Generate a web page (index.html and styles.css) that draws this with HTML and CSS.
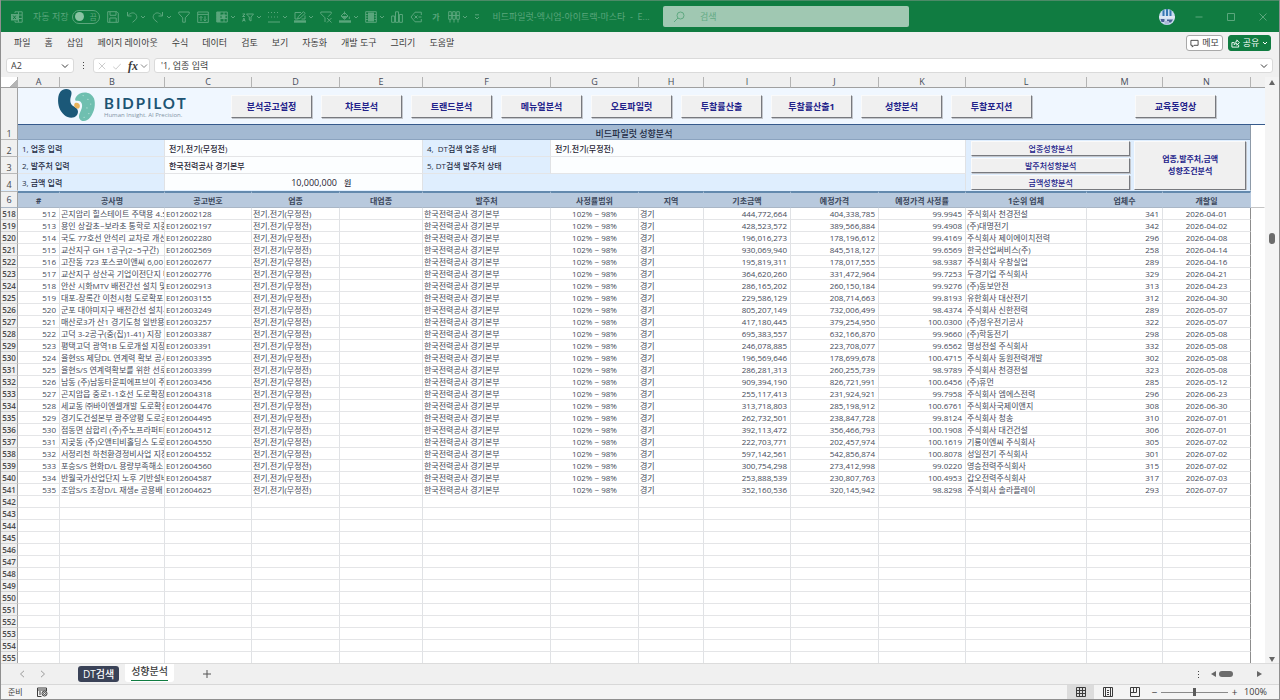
FILE: index.html
```html
<!DOCTYPE html>
<html lang="ko">
<head>
<meta charset="utf-8">
<title>비드파일럿 성향분석</title>
<link rel="stylesheet" href="styles.css">
</head>
<body>
<div class="app">
  <header class="titlebar">
    <div class="quick">
      <svg class="ico app-logo" viewBox="0 0 12 12"><path d="M4 2V.8h7.200v10.400H4V10M7.500 1v10M4 4h7M7 7.500h4"/><rect class="solid" x="0" y="3" width="7" height="6.500"/><path class="cut" d="M2.200 4.600l2.600 3.400M4.800 4.600L2.200 8"/></svg>
      <label class="autosave"><span>자동 저장</span><input type="checkbox" class="sr"><span class="toggle"><i></i>끔</span></label>
      <div class="tools">
        <button class="tool" aria-label="저장"><svg class="ico" viewBox="0 0 12 12"><path d="M.7.7h9.200l1.400 1.400v9.200H.7zM3 .7v3.600h6V.7M2.800 11.300V7h6.400v4.300"/></svg></button>
        <button class="split" aria-label="실행 취소"><svg class="ico" viewBox="0 0 12 12"><path d="M1.500 1v4h4M1.700 4.800C4 1.800 7.500 1 9.500 3s1.600 4.500-.5 6.200L6.500 11.300"/></svg><svg class="chev" viewBox="0 0 6 6"><path d="M1 2l2 2 2-2"/></svg></button>
        <button class="split" aria-label="다시 실행"><svg class="ico" viewBox="0 0 12 12"><path d="M10.500 1v4h-4M10.300 4.800C8 1.800 4.500 1 2.500 3S.9 7.500 3 9.200l2.500 2.100"/></svg><svg class="chev" viewBox="0 0 6 6"><path d="M1 2l2 2 2-2"/></svg></button>
        <button class="tool" aria-label="필터"><svg class="ico" viewBox="0 0 12 12"><path d="M.8 1h10.400v1.600L7.300 6.800v4.400H4.700V6.800L.8 2.600z"/></svg></button>
        <button class="tool" aria-label="정렬"><svg class="ico" viewBox="0 0 12 12"><path d="M.7 1h10.600v10.400H.7zM.7 3.400h10.600M4 10V5.500M2.600 6.800L4 5.400l1.400 1.400M8 5.200V9.800M6.600 8.500L8 9.900l1.400-1.400"/></svg></button>
        <button class="split" aria-label="표"><svg class="ico" viewBox="0 0 12 12"><path d="M.7 1h10.600v10H.7zM.7 4.300h10.600M.7 7.600h10.600M4 1v10M8 1v10"/><path class="solid" d="M1 1h3v10H1zM5.500 3.500h4V8h-4z"/></svg><svg class="chev" viewBox="0 0 6 6"><path d="M1 2l2 2 2-2"/></svg></button>
        <button class="split" aria-label="정렬 및 필터"><svg class="ico" viewBox="0 0 12 12"><path d="M4.500 3h7L9 6v4L7.300 9V6zM.5 3h2.500L.5 5.500H3M.5 10.500l1.400-3.500 1.300 3.500M1 9.500h2"/></svg><svg class="chev" viewBox="0 0 6 6"><path d="M1 2l2 2 2-2"/></svg></button>
        <button class="split" aria-label="테두리"><svg class="ico" viewBox="0 0 12 12"><path stroke-dasharray="1 2" d="M0 1.500h12M0 6h12"/><path d="M0 11h12"/></svg><svg class="chev" viewBox="0 0 6 6"><path d="M1 2l2 2 2-2"/></svg></button>
        <button class="split" aria-label="펜 색"><svg class="ico" viewBox="0 0 12 12"><path d="M7 1.500H1v6.500h2.500M3.500 8l.8-2.500L9.500.7l1.700 1.700L6 7.200zM7.500 8H11V4.500"/><rect class="solid" y="9.300" width="12" height="2.400"/></svg><svg class="chev" viewBox="0 0 6 6"><path d="M1 2l2 2 2-2"/></svg></button>
        <button class="tool" aria-label="필터 지우기"><svg class="ico" viewBox="0 0 12 12"><path d="M5 11V6.800L.8 2.600V1h10.400v1.600L8 5.800M7 7l4.500 4.500M11.500 7L7 11.500"/></svg></button>
        <button class="split" aria-label="채우기 색"><svg class="ico" viewBox="0 0 12 12"><path d="M5.500.5v3M2 5l3.500-3.500L9 5 5.500 8.300zM10.300 5.500v2.500"/><path class="solid" d="M2.500 5h6L5.500 8z"/><rect class="solid" y="9.300" width="12" height="2.400"/></svg><svg class="chev" viewBox="0 0 6 6"><path d="M1 2l2 2 2-2"/></svg></button>
        <button class="split" aria-label="창 고정"><svg class="ico" viewBox="0 0 12 12"><path d="M.7.7h10.600v10.600H.7zM.7 3.500h2M.7 6h2M.7 8.500h2M9.500 3.500h2M9.500 6h2M9.500 8.500h2"/><rect class="solid" x="3" y="1.500" width="6" height="9"/></svg><svg class="chev" viewBox="0 0 6 6"><path d="M1 2l2 2 2-2"/></svg></button>
        <button class="tool" aria-label="차트"><svg class="ico" viewBox="0 0 12 12"><path d="M.6 5h3v6.300h-3zM4.500.8h3v10.500h-3zM8.400 3.500h3v7.800h-3z"/></svg></button>
        <button class="tool" aria-label="레이블"><svg class="ico" viewBox="0 0 12 12"><path d="M11.300 4V1.200H5L1 6l4 4.800h6.300V8M4.500 4.500l3 3M7.500 4.500l-3 3M8.500 6h3"/></svg></button>
        <button class="tool ga" aria-label="글꼴">가</button>
        <button class="split" aria-label="열"><svg class="ico" viewBox="0 0 12 12"><path d="M.7.7h2.600v7.600H.7zM4.700.7h2.600v7.600H4.700zM8.700.7h2.600v7.600H8.700zM.7 4.500h10.600M2 8.500v3M6 8.500v3M10 8.500v3"/></svg><svg class="chev" viewBox="0 0 6 6"><path d="M1 2l2 2 2-2"/></svg></button>
        <button class="more" aria-label="사용자 지정"><svg class="chev" viewBox="0 0 6 6"><path d="M1 .8h4M1 3l2 2 2-2"/></svg></button>
      </div>
      <span class="doc-name">비드파일럿-엑시엄-아이트랙-마스타 &nbsp;-&nbsp; E...</span>
    </div>
    <label class="search">
      <svg class="ico" viewBox="0 0 12 12"><circle cx="7.500" cy="4.500" r="3.500"/><path d="M5 7L1 11"/></svg>
      <input type="text" placeholder="검색" aria-label="검색">
    </label>
    <div class="window-tools">
      <svg class="avatar" viewBox="0 0 16 16"><circle cx="8" cy="8" r="8" fill="#c9dcf0"/><path fill="#3878b4" d="M3.500 2l2-1.500V7h-2zM7 0h2v7H7zM10.500.5l2 1.500v5h-2z"/><path fill="#dfe8f4" d="M.2 7h15.600v2.500H.2z"/><path fill="#4b5f93" d="M1.500 10h4v3h-3zM8 10.500h6l-2 3H8z"/><path fill="#aeb9d8" d="M5 12h5v3.500H6z"/></svg>
      <button aria-label="최소화"><svg class="ico" viewBox="0 0 12 12"><path d="M2.500 6h7"/></svg></button>
      <button aria-label="최대화"><svg class="ico" viewBox="0 0 12 12"><path d="M2.500 2.500h7v7h-7z"/></svg></button>
      <button aria-label="닫기"><svg class="ico" viewBox="0 0 12 12"><path d="M2.500 2.500l7 7M9.500 2.500l-7 7"/></svg></button>
    </div>
  </header>

  <nav class="menubar">
    <a href="#">파일</a><a href="#">홈</a><a href="#">삽입</a><a href="#">페이지 레이아웃</a><a href="#">수식</a><a href="#">데이터</a><a href="#">검토</a><a href="#">보기</a><a href="#">자동화</a><a href="#">개발 도구</a><a href="#">그리기</a><a href="#">도움말</a>
    <div class="menu-actions">
      <button class="memo"><svg viewBox="0 0 10 10"><path d="M1 1.500h8v5.500H4.500L2.500 9V7H1z"/></svg>메모</button>
      <button class="share"><svg viewBox="0 0 10 10"><path d="M3.500 4H1v5h7.500V6.500M3.500 6.500c0-2.500 1.500-3.500 3-3.500V1l2.800 3-2.800 3V5c-1.500 0-2.300.3-3 1.500z"/></svg>공유<svg class="small" viewBox="0 0 6 6"><path d="M1 2l2 2 2-2"/></svg></button>
    </div>
  </nav>

  <div class="formula">
    <div class="namebox"><input type="text" value="A2" aria-label="이름 상자"><svg viewBox="0 0 8 8"><path d="M1 2.500l3 3 3-3"/></svg></div>
    <span class="vdots"></span>
    <div class="fx-box">
      <svg class="dim" viewBox="0 0 10 10"><path d="M1 1l8 8M9 1L1 9"/></svg>
      <svg class="dim" viewBox="0 0 10 10"><path d="M0 5.500L3.500 9 10 2"/></svg>
      <span class="fx">fx</span>
      <svg class="drop" viewBox="0 0 8 8"><path d="M1 2.500l3 3 3-3"/></svg>
    </div>
    <div class="entry"><input type="text" value="'1, 업종 입력" aria-label="수식 입력줄"><svg viewBox="0 0 8 8"><path d="M1 2.500l3 3 3-3"/></svg></div>
  </div>

  <main class="sheet">
    <div class="grid-wrap">
      <table class="grid">
        <colgroup>
          <col class="w-head"><col class="w-a"><col class="w-b"><col class="w-c"><col class="w-d"><col class="w-e"><col class="w-f"><col class="w-g"><col class="w-h"><col class="w-i"><col class="w-j"><col class="w-k"><col class="w-l"><col class="w-m"><col class="w-n"><col class="w-o">
        </colgroup>
        <thead>
          <tr class="letters"><th class="corner"></th><th>A</th><th>B</th><th>C</th><th>D</th><th>E</th><th>F</th><th>G</th><th>H</th><th>I</th><th>J</th><th>K</th><th>L</th><th>M</th><th>N</th><th></th></tr>
          <tr class="banner">
            <th class="num" rowspan="2">1</th>
            <td colspan="15">
              <div class="banner-row">
                <div class="logo">
                  <svg viewBox="0 0 42 36"><path fill="#1b5878" d="M9 0c6 0 6.500 4 5 8-1.500 5-.5 9 4 11 4 2 4.500 6 2 9-3 3.500-9 3-13-.5C2 23 0 17 .5 10 1 4 4 0 9 0z"/><path fill="#6fbfb0" d="M23 5c6-3 13-1 15.500 5 2 6 .5 14-4 20-3 4-7 5-10 3-3-2.500-2-6 0-10 2-4 2-8-1-10-3-1-5 0-5-2s2-4.500 4.500-6z"/><path fill="#e9b35c" d="M20 14.500c2 0 3.500 1.500 3.500 3.500S22 21.500 20 20.500 17.500 19 17.500 17s1-2.500 2.500-2.500z"/><g fill="#b4e0d6"><circle cx="27" cy="7" r=".7"/><circle cx="32" cy="11" r=".7"/><circle cx="35" cy="16" r=".7"/><circle cx="31" cy="20" r=".7"/><circle cx="33" cy="26" r=".7"/><circle cx="28" cy="30" r=".7"/></g></svg>
                  <div class="brand"><strong>BIDPILOT</strong><span>Human Insight. AI Precision.</span></div>
                </div>
                <button class="btn">분석공고설정</button><button class="btn">챠트분석</button><button class="btn">트랜드분석</button><button class="btn">메뉴얼분석</button><button class="btn">오토파일럿</button><button class="btn">투찰률산출</button><button class="btn">투찰률산출1</button><button class="btn">성향분석</button><button class="btn">투찰포지션</button><button class="btn last">교육동영상</button>
              </div>
            </td>
          </tr>
          <tr class="title"><th colspan="14">비드파일럿 성향분석</th><td class="off"></td></tr>
          <tr class="input"><th class="num">2</th><th class="lab" colspan="2">1, 업종 입력</th><td class="val" colspan="3">전기,전기(무정전)</td><th class="lab">4,&nbsp; DT검색 업종 상태</th><td class="val" colspan="5">전기,전기(무정전)</td>
            <td class="actions" colspan="3" rowspan="3"><div class="action-grid"><button class="btn thin">업종성향분석</button><button class="btn thin">발주처성향분석</button><button class="btn thin">금액성향분석</button><button class="btn tall">업종,발주처,금액<br>성향조건분석</button></div></td><td class="off" rowspan="3"></td></tr>
          <tr class="input"><th class="num">3</th><th class="lab" colspan="2">2, 발주처 입력</th><td class="val" colspan="3">한국전력공사 경기본부</td><th class="lab">5, DT검색 발주처 상태</th><td class="val" colspan="5"></td></tr>
          <tr class="input last-input"><th class="num">4</th><th class="lab" colspan="2">3, 금액 입력</th><td class="val amount" colspan="2">10,000,000</td><td class="val">원</td><td class="fill" colspan="6"></td></tr>
          <tr class="heads"><th class="num">6</th><th>#</th><th>공사명</th><th>공고번호</th><th>업종</th><th>대업종</th><th>발주처</th><th>사정률범위</th><th>지역</th><th>기초금액</th><th>예정가격</th><th>예정가격 사정률</th><th>1순위 업체</th><th>업체수</th><th>개찰일</th><td class="off"></td></tr>
        </thead>
        <tbody id="rows"></tbody>
      </table>
    </div>
    <div class="vscroll"><span class="up"></span><span class="thumb"></span><span class="down"></span></div>
  </main>

  <footer>
    <div class="tabs">
      <button class="arrow" aria-label="이전 시트"><svg viewBox="0 0 8 8"><path d="M6 .8L2.500 4 6 7.200"/></svg></button>
      <button class="arrow" aria-label="다음 시트"><svg viewBox="0 0 8 8"><path d="M2 .8L5.500 4 2 7.200"/></svg></button>
      <button class="tab dark">DT검색</button>
      <button class="tab active"><span>성향분석</span></button>
      <button class="arrow add" aria-label="새 시트"><svg viewBox="0 0 8 8"><path d="M4 0v8M0 4h8"/></svg></button>
      <div class="hscroll"><span class="vdots"></span><span class="left"></span><span class="thumb"></span><span class="right"></span></div>
    </div>
    <div class="status">
      <span>준비</span>
      <svg class="macro" viewBox="0 0 11 10"><path d="M.5 9.500V1h9v3M.5 3h9M2 5h2M2 7h2M.5 9.500h4"/><circle cx="7.500" cy="6.500" r="2.500"/><circle cx="7.500" cy="6.500" r="1"/></svg>
      <div class="views">
        <button class="on" aria-label="기본"><svg viewBox="0 0 10 10"><path d="M.5.5h9v9h-9zM.5 3.500h9M.5 6.500h9M3.500.5v9M6.500.5v9"/></svg></button>
        <button aria-label="페이지 레이아웃"><svg viewBox="0 0 10 10"><path d="M.5.5h9v9h-9zM4 3.500h2M4 5.500h2M4 7.500h2M2.500.5v9M7.500.5v9"/></svg></button>
        <button aria-label="페이지 나누기"><svg viewBox="0 0 10 10"><path d="M.5.5h9v9h-9zM3.500.5v5M6.500.5v5M.5 5.500h6"/></svg></button>
      </div>
      <button class="zoom-btn" aria-label="축소">−</button>
      <input class="zoom" type="range" min="0" max="200" value="100" aria-label="확대/축소">
      <button class="zoom-btn" aria-label="확대">+</button>
      <span class="percent">100%</span>
    </div>
  </footer>
</div>
<script src="rows.js"></script>
</body>
</html>
```

FILE: rows.js
```js
const records = [
  ["곤지암리 힐스테이트 주택용 4.5", "E012602128", "444,772,664", "404,338,785", "99.9945", "주식회사 천경전설", 341, "2026-04-01"],
  ["용인 상갈초~보라초 통학로 지중", "E012602197", "428,523,572", "389,566,884", "99.4908", "(주)대명전기", 342, "2026-04-02"],
  ["국도 77호선 안석리 교차로 개선", "E012602280", "196,016,273", "178,196,612", "99.4169", "주식회사 제이에이치전력", 296, "2026-04-08"],
  ["교산지구 GH 1공구(2~5구간)", "E012602569", "930,069,940", "845,518,127", "99.6569", "한국산업써비스(주)", 258, "2026-04-14"],
  ["고잔동 723 포스코이앤씨 6,00", "E012602677", "195,819,311", "178,017,555", "98.9387", "주식회사 우창실업", 289, "2026-04-16"],
  ["교산지구 상산곡 기업이전단지 배", "E012602776", "364,620,260", "331,472,964", "99.7253", "두경기업 주식회사", 329, "2026-04-21"],
  ["안산 시화MTV 배전간선 설치 및", "E012602913", "286,165,202", "260,150,184", "99.9276", "(주)동보안전", 313, "2026-04-23"],
  ["대포-장록간 이천시청 도로확포", "E012603155", "229,586,129", "208,714,663", "99.8193", "유한회사 대산전기", 312, "2026-04-30"],
  ["군포 대야미지구 배전간선 설치-", "E012603249", "805,207,149", "732,006,499", "98.4374", "주식회사 신한전력", 289, "2026-05-07"],
  ["매산로3가 산1 경기도청 일반용", "E012603257", "417,180,445", "379,254,950", "100.0300", "(주)정우전기공사", 322, "2026-05-07"],
  ["고덕 3-2공구(중(집)1-41) 지장", "E012603387", "695,383,557", "632,166,870", "99.9660", "(주)학동전기", 298, "2026-05-08"],
  ["평택고덕 광역1B 도로개설 지장", "E012603391", "246,078,885", "223,708,077", "99.6562", "명성전설 주식회사", 332, "2026-05-08"],
  ["율현SS 제당DL 연계력 확보 공사", "E012603395", "196,569,646", "178,699,678", "100.4715", "주식회사 동원전력개발", 302, "2026-05-08"],
  ["율현S/S 연계력확보를 위한 선로", "E012603399", "286,281,313", "260,255,739", "98.9789", "주식회사 천경전설", 323, "2026-05-08"],
  ["남동 (주)남동타운피에프브이 주", "E012603456", "909,394,190", "826,721,991", "100.6456", "(주)휴먼", 285, "2026-05-12"],
  ["곤지암읍 중로1-1호선 도로확장", "E012604318", "255,117,413", "231,924,921", "99.7958", "주식회사 엠에스전력", 296, "2026-06-23"],
  ["세교동 ㈜바이엔셀개발 도로확장", "E012604476", "313,718,803", "285,198,912", "100.6761", "주식회사국제이앤지", 308, "2026-06-30"],
  ["경기도건설본부 광주양평 도로공", "E012604495", "262,732,501", "238,847,728", "99.8124", "주식회사 청송", 310, "2026-07-01"],
  ["점동면 삼합리 (주)주노프라퍼티", "E012604512", "392,113,472", "356,466,793", "100.1908", "주식회사 대건건설", 306, "2026-07-01"],
  ["지곶동 (주)오앤티비홀딩스 도로", "E012604550", "222,703,771", "202,457,974", "100.1619", "기룡이엔씨 주식회사", 305, "2026-07-02"],
  ["서정리천 하천환경정비사업 지장", "E012604552", "597,142,561", "542,856,874", "100.8078", "성일전기 주식회사", 301, "2026-07-02"],
  ["포승S/S 현화D/L 용량부족해소", "E012604560", "300,754,298", "273,412,998", "99.0220", "영승전력주식회사", 315, "2026-07-02"],
  ["반월국가산업단지 노후 기반설비", "E012604587", "253,888,539", "230,807,763", "100.4953", "갑오전력주식회사", 317, "2026-07-03"],
  ["조암S/S 조장D/L 재생e 공용배", "E012604625", "352,160,536", "320,145,942", "98.8298", "주식회사 솔라플레이", 293, "2026-07-07"]
];
const FIRST_ROW = 518, LAST_ROW = 555, FIRST_INDEX = 512;
const align = ["r", "", "", "", "", "", "c", "", "r", "r", "r", "", "r", "c", "off"];
const body = document.getElementById("rows");
for (let n = FIRST_ROW; n <= LAST_ROW; n++) {
  const rec = records[n - FIRST_ROW];
  const cells = rec
    ? [FIRST_INDEX + n - FIRST_ROW, rec[0], rec[1], "전기,전기(무정전)", "", "한국전력공사 경기본부", "102% ~ 98%", "경기", rec[2], rec[3], rec[4], rec[5], rec[6], rec[7], ""]
    : Array(15).fill("");
  const tr = body.insertRow();
  const th = document.createElement("th");
  th.className = "num";
  th.textContent = n;
  tr.append(th);
  cells.forEach((text, i) => {
    const td = tr.insertCell();
    td.className = align[i];
    td.textContent = text;
  });
}
```

FILE: styles.css
```css
* { box-sizing: border-box; }
body { margin: 0; font: 9px/12px "Open Sans", "Noto Sans CJK KR", sans-serif; color: #3c3c3c; }
button, input { font: inherit; color: inherit; margin: 0; padding: 0; border: 0; background: none; }
input { min-width: 0; outline: 0; }
a { color: inherit; text-decoration: none; }
svg { fill: none; stroke: currentColor; display: block; flex: none; }
.sr { position: absolute; opacity: 0; width: 1px; height: 1px; }

.app { display: flex; flex-direction: column; height: 100vh; overflow: hidden; background: #f0f0f0; border: 1px solid #8f8f8f; border-top: 0; }

.titlebar { display: grid; grid-template-columns: 662fr 246fr 370fr; height: 32px; flex: none; align-items: center; background: #107c41; border-top: 1px solid #4c8a67; color: #5aa67c; }
.quick { display: flex; align-items: center; min-width: 0; padding-left: 10px; }
.ico { width: 12px; height: 12px; }
.chev { width: 6px; height: 6px; }
.solid { fill: currentColor; stroke: none; }
.cut { stroke: #107c41; }
.autosave { display: flex; align-items: center; gap: 4px; margin-left: 10px; white-space: nowrap; }
.toggle { display: flex; align-items: center; gap: 5px; width: 28px; height: 14px; padding-left: 2px; border: 1px solid; border-radius: 7px; font-size: 8px; line-height: 10px; }
.toggle i { width: 9px; height: 9px; border-radius: 50%; background: #8ac4a3; }
.tools { display: flex; align-items: center; gap: 6px; margin-left: 7px; }
.tool { width: 13px; }
.split { display: flex; align-items: center; gap: 2px; }
.ga { font-size: 8px; font-weight: bold; }
.doc-name { margin-left: 12px; overflow: hidden; white-space: nowrap; }
.search { display: flex; align-items: center; gap: 15px; height: 21px; padding-left: 10px; border-radius: 2px; background: #a0c8b2; color: #5fa981; }
.search input { flex: 1; }
.search input::placeholder { color: #63ab84; opacity: 1; }
.window-tools { display: flex; align-items: center; justify-content: flex-end; gap: 20px; padding-right: 10px; }
.window-tools .avatar { width: 16px; height: 16px; stroke: none; margin-right: -2px; }

.menubar { display: flex; align-items: center; gap: 14px; height: 22px; flex: none; padding: 0 8px 0 13px; white-space: nowrap; }
.menu-actions { display: flex; gap: 5px; margin-left: auto; }
.menu-actions button { display: flex; align-items: center; justify-content: center; gap: 3px; width: 37px; height: 16px; border-radius: 3px; border: 1px solid #a9a9a9; background: #fff; }
.menu-actions svg { width: 9px; height: 9px; }
.menu-actions .share { width: 43px; border-color: #107c41; background: #107c41; color: #fff; }
.menu-actions .small { width: 6px; height: 6px; }

.formula { display: flex; align-items: center; gap: 4px; height: 23px; flex: none; padding: 0 6px 0 5px; }
.formula svg { width: 8px; height: 8px; }
.namebox, .fx-box, .entry { display: flex; align-items: center; height: 15px; padding: 0 4px; border: 1px solid #dadada; border-radius: 3px; background: #fff; }
.namebox { width: 68px; }
.namebox input, .entry input { flex: 1; }
.vdots { width: 1px; height: 7px; margin: 0 5px; background: repeating-linear-gradient(#444 0 1px, transparent 1px 3px); }
.fx-box { gap: 7px; width: 57px; }
.fx-box .dim { color: #c0c0c0; }
.fx-box .drop { margin-left: -5px; color: #888; }
.fx { font: italic bold 12px/12px "Liberation Serif", serif; }
.entry { flex: 1; padding-left: 6px; }

.sheet { display: flex; flex: 1; min-height: 0; }
.grid-wrap { flex: 1; min-width: 0; overflow: hidden; background: #fff; }
.grid { width: 100%; table-layout: fixed; border-collapse: separate; border-spacing: 0; font-size: 8px; line-height: 11px; color: #454b59; }
.w-head { width: 17px; } .w-a { width: 42px; } .w-b { width: 105px; } .w-c { width: 87px; } .w-d { width: 88px; } .w-e { width: 83px; } .w-f { width: 128px; } .w-g { width: 88px; } .w-h { width: 65px; } .w-i { width: 87px; } .w-j { width: 88px; } .w-k { width: 87px; } .w-l { width: 121px; } .w-m { width: 76px; } .w-n { width: 88px; } .w-o { width: 14px; }
.grid th, .grid td { padding: 0 1px; overflow: hidden; white-space: nowrap; border-right: 1px solid #e0e2e5; border-bottom: 1px solid #e4e5e7; }
.grid tbody td, .grid tbody th { height: 12px; }
.grid td.r { text-align: right; padding-right: 3px; }
.grid td.c { text-align: center; }
.grid td:nth-child(15) { border-right-color: #8d8d8d; }
.grid td.off { border-color: #fff; }
.grid .num { padding: 0; font-weight: 600; color: #4a4a4a; background: #f0f0f0; border-right-color: #a2a2a2; border-bottom-color: #d4d4d4; vertical-align: bottom; }
.grid thead .num { font-size: 9px; font-weight: normal; border-bottom-color: #b9b9b9; }
.grid .letters th { height: 11px; padding: 0; font-size: 9px; line-height: 10px; font-weight: normal; overflow: visible; background: #f0f0f0; border-right-color: #b4b4b4; border-bottom-color: #a0a0a0; }
.grid .letters .corner { background: linear-gradient(135deg, transparent 70%, #b5b5b5 70%); }
.grid .letters th:last-child { border-right: 0; }
.grid .banner td { height: 37px; padding: 0; background: #f0f7ff; border-right: 0; border-bottom-color: #365a8c; }
.banner-row { display: flex; gap: 9px; align-items: center; padding: 0 49px 0 39px; }
.logo { display: flex; gap: 6px; width: 165px; }
.logo > svg { width: 41px; height: 34px; stroke: none; }
.brand { display: flex; flex-direction: column; justify-content: center; gap: 1px; padding-top: 2px; }
.brand strong { font: bold 15px/14px Lato, sans-serif; letter-spacing: 2px; color: #1d5473; }
.brand span { font-size: 6px; line-height: 8px; color: #8194a5; }
.btn { height: 23px; width: 81px; font-size: 9px; font-weight: bold; color: #22228a; background: #f0f0f0; border: 1px solid #fafafa; border-right-color: #77797e; border-bottom-color: #77797e; box-shadow: 1px 1px 0 #c3c6cb; }
.btn.last { margin-left: auto; }
.grid .title th { height: 15px; font-size: 9px; font-weight: 500; line-height: 11px; color: #1e2b42; background: #a3b9d2; border-bottom-color: #8ba3bf; border-right-color: #8d9aa8; vertical-align: bottom; }
.grid .input th, .grid .input td { height: 17px; }
.grid .lab { padding-left: 4px; text-align: left; color: #1e2b42; background: #dfeefe; font-weight: 500; }
.grid .val { padding-left: 4px; color: #1e2433; background: #fcfeff; font-weight: 500; }
.grid .amount { text-align: right; padding-right: 3px; border-right: 0; font-size: 9px; }
.grid .last-input td, .grid .last-input th, .grid .actions { border-bottom-color: #dfeefe; }
.grid .fill { background: #dfeefe; }
.grid .input .actions { padding: 0 4px 0 5px; background: #dfeefe; border-right-color: #8d9aa8; vertical-align: middle; }
.action-grid { display: grid; grid-template-columns: 160fr 112fr; grid-template-rows: repeat(3, 15px); gap: 2px 4px; }
.action-grid .btn { width: auto; height: auto; font-size: 8px; line-height: 11px; }
.action-grid .thin { grid-column: 1; font-weight: 500; }
.action-grid .tall { grid-column: 2; grid-row: 1 / 4; line-height: 12px; }
.grid .heads th { height: 17px; font-weight: bold; color: #3a465a; background: #b8c9dd; border-top: 2px solid #6389ad; border-right-color: #b8c9dd; border-bottom-color: #a9b6c6; }
.grid .heads .num { font-weight: normal; background: #f0f0f0; border-top: 1px solid #b9b9b9; border-right-color: #a2a2a2; vertical-align: middle; }
.grid .heads .off { border-bottom-color: #c4c4c4; }

.vscroll { display: flex; flex-direction: column; align-items: center; width: 14px; padding: 3px 0 1px; background: #f4f4f4; }
.up, .down { border: 3px solid transparent; }
.up { border-top: 0; border-bottom: 5px solid #666; }
.down { border-bottom: 0; border-top: 5px solid #666; margin-top: auto; }
.vscroll .thumb { width: 6px; height: 11px; margin-top: 148px; border-radius: 3px; background: #6c6c6c; }

footer { flex: none; }
.tabs { display: flex; align-items: center; height: 22px; padding-left: 17px; border-top: 1px solid #dcdcdc; border-bottom: 1px solid #d8d8d8; }
.arrow { margin-right: 13px; color: #9b9b9b; }
.arrow svg { width: 8px; height: 8px; }
.tab { font-size: 10px; line-height: 13px; }
.dark { height: 16px; margin-left: 18px; padding: 0 5px; border-radius: 3px; background: #3a4257; color: #fff; font-weight: 500; }
.active { align-self: flex-start; height: 18px; margin: 0 29px 0 6px; padding: 0 6px; border-radius: 0 0 3px 3px; background: #fff; font-weight: 500; }
.active span { display: block; height: 16px; border-bottom: 1px solid #107c41; }
.add { color: #555; }
.hscroll { display: flex; align-items: center; margin-left: auto; padding-right: 17px; }
.hscroll .vdots { margin-right: 12px; }
.left, .right { border: 3px solid transparent; }
.left { border-left: 0; border-right: 5px solid #666; }
.right { border-right: 0; border-left: 5px solid #666; }
.hscroll .thumb { width: 14px; height: 6px; margin: 0 24px 0 3px; border-radius: 3px; background: #6c6c6c; }

.status { display: flex; align-items: center; height: 14px; padding: 0 12px 0 7px; background: #f4f4f4; font-size: 8px; }
.macro { width: 11px; height: 10px; margin-left: 14px; }
.views { display: flex; align-self: stretch; margin-left: auto; margin-right: 3px; }
.views button { display: flex; align-items: center; justify-content: center; width: 27px; }
.views .on { background: #dcdcdc; }
.views svg { width: 10px; height: 10px; }
.zoom-btn { width: 7px; font-size: 10px; line-height: 10px; }
.zoom { appearance: none; width: 67px; height: 12px; margin: 0 3px; background: linear-gradient(#8a8a8a, #8a8a8a) center / 100% 1px no-repeat; }
.zoom::-webkit-slider-thumb { appearance: none; width: 3px; height: 8px; background: #5b5b5b; }
.percent { margin-left: 6px; font-size: 9px; }
```
